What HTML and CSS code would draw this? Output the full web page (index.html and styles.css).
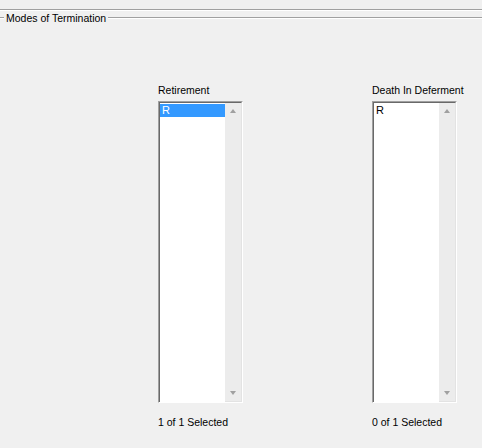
FILE: index.html
```html
<!DOCTYPE html>
<html>
<head>
<meta charset="utf-8">
<link rel="stylesheet" href="styles.css">
</head>
<body>
<div class="top-rule"></div>
<div class="group">
  <div class="group-head">
    <span class="tick"></span>
    <span class="group-title">Modes of Termination</span>
    <span class="rest"></span>
  </div>
  <div class="lists">
    <div class="col col-1">
      <div class="label">Retirement</div>
      <div class="listbox">
        <div class="items">
          <div class="item selected">R</div>
        </div>
        <div class="scroll">
          <div class="arrow up"></div>
          <div class="arrow down"></div>
        </div>
      </div>
      <div class="count">1 of 1 Selected</div>
    </div>
    <div class="col col-2">
      <div class="label">Death In Deferment</div>
      <div class="listbox">
        <div class="items">
          <div class="item">R</div>
        </div>
        <div class="scroll">
          <div class="arrow up"></div>
          <div class="arrow down"></div>
        </div>
      </div>
      <div class="count">0 of 1 Selected</div>
    </div>
  </div>
</div>
</body>
</html>
```

FILE: styles.css
```css
html, body {
  margin: 0;
  padding: 0;
  background: #f0f0f0;
  font-family: "Liberation Sans", Arial, sans-serif;
  font-size: 10.5px;
  color: #000;
  width: 482px;
  height: 448px;
  overflow: hidden;
}

.top-rule {
  margin-top: 9px;
  height: 1px;
  background: #a0a0a0;
  border-bottom: 1px solid #ffffff;
}

.group-head {
  display: flex;
  align-items: center;
  height: 14px;
}

.tick {
  width: 4px;
  height: 1px;
  background: #a0a0a0;
  border-bottom: 1px solid #fff;
}

.group-title {
  padding: 0 2px 0 2px;
  line-height: 14px;
  white-space: nowrap;
}

.rest {
  flex: 1;
  height: 1px;
  background: #a0a0a0;
  border-bottom: 1px solid #fff;
}

.lists {
  display: flex;
  padding-left: 158px;
  padding-top: 58px;
  gap: 129px;
}

.col {
  display: flex;
  flex-direction: column;
  width: 85px;
}

.label {
  line-height: 14px;
  height: 14px;
  margin-bottom: 4px;
  white-space: nowrap;
}

.listbox {
  width: 85px;
  height: 302px;
  box-sizing: border-box;
  border-top: 1px solid #a0a0a0;
  border-left: 1px solid #a0a0a0;
  border-right: 1px solid #ffffff;
  border-bottom: 1px solid #ffffff;
  display: flex;
}

.listbox > .items,
.listbox > .scroll {
  height: 100%;
}

.items {
  flex: 1;
  background: #fff;
  border-top: 1px solid #696969;
  border-left: 1px solid #696969;
  box-sizing: border-box;
}

.item {
  height: 13px;
  line-height: 13px;
  padding-left: 2px;
  margin-top: 1px;
  font-size: 11px;
}

.item.selected {
  background: #3399ff;
  color: #fff;
}

.scroll {
  width: 17px;
  background: #ececec;
  border-top: 1px solid #696969;
  border-right: 1px solid #e3e3e3;
  border-bottom: 1px solid #e3e3e3;
  box-sizing: border-box;
  display: flex;
  flex-direction: column;
  justify-content: space-between;
  align-items: center;
  padding: 6px 0 6px 0;
}

.arrow {
  width: 0;
  height: 0;
  border-left: 3px solid transparent;
  border-right: 3px solid transparent;
}

.arrow.up {
  border-bottom: 4px solid #a0a0a0;
}

.arrow.down {
  border-top: 4px solid #a0a0a0;
}

.count {
  margin-top: 12px;
  line-height: 14px;
  white-space: nowrap;
}
```
